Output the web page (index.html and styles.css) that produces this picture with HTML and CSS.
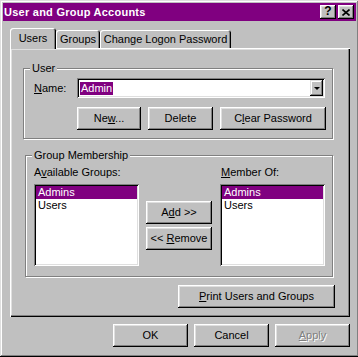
FILE: index.html
```html
<!DOCTYPE html>
<html lang="en">
<head>
  <meta charset="UTF-8">
  <title>User and Group Accounts</title>
  <link rel="stylesheet" href="styles.css">
</head>
<body>
  <div class="window">
    <div class="titlebar">
      <span class="title">User and Group Accounts</span>
      <div class="caption-btns">
        <span class="cap-btn help">?</span>
        <span class="cap-btn">
          <svg width="8" height="7" viewBox="0 0 8 7"><path d="M0.5 0.5l7 6M7.5 0.5l-7 6" stroke="#000" stroke-width="1.6" fill="none"/></svg>
        </span>
      </div>
    </div>

    <div class="tabs">
      <div class="tab active tab-users">Users</div>
      <div class="tab tab-groups">Groups</div>
      <div class="tab tab-password">Change Logon Password</div>
    </div>

    <div class="panel">
      <div class="group user-group">
        <div class="group-title">User</div>
        <div class="name-row">
          <label class="name-label"><u>N</u>ame:</label>
          <div class="combo">
            <span class="combo-value"><span class="selected-text">Admin</span></span>
            <span class="combo-btn"><i class="arrow"></i></span>
          </div>
        </div>
        <div class="btn-row">
          <button class="btn btn-new">Ne<u>w</u>...</button>
          <button class="btn btn-delete">Delete</button>
          <button class="btn btn-clear">C<u>l</u>ear Password</button>
        </div>
      </div>

      <div class="group member-group">
        <div class="group-title">Group Membership</div>
        <div class="member-grid">
          <label class="col-a">A<u>v</u>ailable Groups:</label>
          <label class="col-c member-label"><u>M</u>ember Of:</label>
          <ul class="list col-a">
            <li class="selected">Admins</li>
            <li>Users</li>
          </ul>
          <div class="move-btns col-b">
            <button class="btn">A<u>d</u>d &gt;&gt;</button>
            <button class="btn">&lt;&lt; <u>R</u>emove</button>
          </div>
          <ul class="list col-c">
            <li class="selected">Admins</li>
            <li>Users</li>
          </ul>
        </div>
      </div>

      <button class="btn print-btn"><u>P</u>rint Users and Groups</button>
    </div>

    <div class="dialog-btns">
      <button class="btn dlg-btn">OK</button>
      <button class="btn dlg-btn">Cancel</button>
      <button class="btn dlg-btn disabled"><u>A</u>pply</button>
    </div>
  </div>
</body>
</html>
```

FILE: styles.css
```css
html, body { margin: 0; padding: 0; overflow: hidden; background: #c0c0c0; }
.window {
  width: 359px;
  height: 357px;
  box-sizing: border-box;
  padding: 3px;
  background: #c0c0c0;
  box-shadow: inset -1px -1px #000, inset 1px 1px #dfdfdf, inset -2px -2px #808080, inset 2px 2px #fff;
  display: flex;
  flex-direction: column;
  font: 11px/13px "Liberation Sans", Arial, sans-serif;
  color: #000;
}
.titlebar {
  height: 18px;
  background: #800080;
  color: #fff;
  font-weight: bold;
  display: flex;
  align-items: center;
  justify-content: space-between;
  padding: 0 2px 0 1px;
}
.title { letter-spacing: 0.25px; }
.caption-btns { display: flex; gap: 2px; }
.cap-btn {
  width: 16px;
  height: 14px;
  background: #c0c0c0;
  color: #000;
  display: flex;
  align-items: center;
  justify-content: center;
  box-shadow: inset -1px -1px #000, inset 1px 1px #fff, inset -2px -2px #808080, inset 2px 2px #dfdfdf;
}
.cap-btn.help { font-size: 12px; padding-bottom: 1px; box-sizing: border-box; }

.tabs { display: flex; align-items: flex-end; height: 20px; margin: 7px 0 0 7px; }
.tab {
  height: 18px;
  box-sizing: border-box;
  padding-top: 3px;
  text-align: center;
  border-radius: 3px 3px 0 0;
  box-shadow: inset 1px 1px #fff, inset -1px 0 #000, inset -2px 0 #808080;
}
.tab.active { height: 21px; padding-top: 4px; margin-bottom: -1px; z-index: 1; background: #c0c0c0; }
.tab-users { width: 46px; }
.tab-groups { width: 44px; }
.tab-password { width: 131px; }

.panel {
  height: 269px;
  box-sizing: border-box;
  margin: 0 6px 0 7px;
  box-shadow: inset 1px 1px #fff, inset -1px -1px #000, inset -2px -2px #808080, inset 2px 2px #dfdfdf;
  display: flex;
  flex-direction: column;
  align-items: flex-start;
}
.group {
  box-sizing: border-box;
  border: 1px solid #808080;
  box-shadow: inset 1px 1px #fff, 1px 1px #fff;
  display: flex;
  flex-direction: column;
  align-items: flex-start;
}
.group-title { background: #c0c0c0; padding: 0 2px; margin-top: -7px; }
.user-group { width: 310px; margin: 20px 0 0 13px; padding: 0 0 8px 10px; }
.user-group .group-title { margin-left: -4px; }
.member-group { width: 308px; margin: 16px 0 0 15px; padding: 0 0 10px 8px; }
.member-group .group-title { margin-left: -2px; }

.name-row { display: flex; align-items: center; margin-top: 3px; }
.name-label { width: 43px; }
.combo {
  width: 248px;
  height: 20px;
  box-sizing: border-box;
  padding: 2px;
  background: #fff;
  display: flex;
  box-shadow: inset 1px 1px #808080, inset -1px -1px #fff, inset 2px 2px #000, inset -2px -2px #dfdfdf;
}
.combo-value { flex: 1; display: flex; align-items: center; padding-left: 1px; }
.selected-text { background: #800080; color: #fff; padding: 0 1px; }
.combo-btn {
  width: 13px;
  background: #c0c0c0;
  display: flex;
  align-items: center;
  justify-content: center;
  box-shadow: inset -1px -1px #000, inset 1px 1px #dfdfdf, inset -2px -2px #808080, inset 2px 2px #fff;
}
.arrow {
  width: 0;
  height: 0;
  border-left: 3px solid transparent;
  border-right: 3px solid transparent;
  border-top: 3px solid #000;
}

.btn {
  height: 23px;
  padding: 0;
  border: none;
  background: #c0c0c0;
  font: inherit;
  color: #000;
  text-align: center;
  box-shadow: inset -1px -1px #000, inset 1px 1px #fff, inset -2px -2px #808080, inset 2px 2px #dfdfdf;
}
.btn-row { display: flex; gap: 7px; margin: 9px 0 0 43px; }
.btn-new { width: 64px; }
.btn-delete { width: 65px; }
.btn-clear { width: 106px; }

.member-grid {
  display: grid;
  grid-template-columns: 105px 7px 66px 8px 105px;
  grid-template-rows: 13px 82px;
  row-gap: 5px;
  margin-top: 4px;
}
.col-a { grid-column: 1; }
.col-b { grid-column: 3; }
.col-c { grid-column: 5; }
.member-label { padding-left: 1px; }
.list {
  margin: 0;
  padding: 2px;
  list-style: none;
  background: #fff;
  box-sizing: border-box;
  height: 82px;
  box-shadow: inset 1px 1px #808080, inset -1px -1px #fff, inset 2px 2px #000, inset -2px -2px #dfdfdf;
}
.list li { padding-left: 2px; line-height: 13px; }
.list li.selected { background: #800080; color: #fff; }
.move-btns { display: flex; flex-direction: column; gap: 3px; padding-top: 17px; }
.move-btns .btn { width: 66px; }

.print-btn { width: 157px; align-self: flex-end; margin: 8px 15px 0 0; }

.dialog-btns { display: flex; justify-content: flex-end; gap: 6px; margin: 7px 6px 0 0; }
.dlg-btn { width: 75px; }
.disabled { color: #808080; text-shadow: 1px 1px 0 #fff; }
```
